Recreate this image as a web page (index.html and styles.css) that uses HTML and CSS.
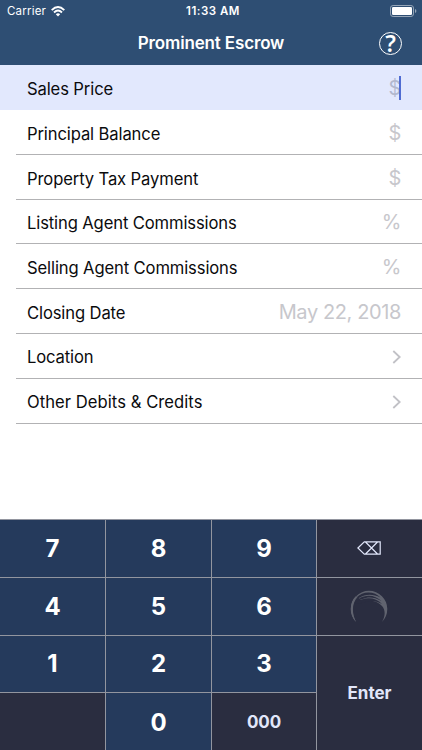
FILE: index.html
```html
<!DOCTYPE html>
<html lang="en">
<head>
<meta charset="utf-8">
<title>Prominent Escrow</title>
<link rel="stylesheet" href="styles.css">
</head>
<body>
<div class="app">
  <header class="header">
    <div class="status">
      <div class="carrier"><span>Carrier</span>
        <svg class="wifi" width="14" height="11" viewBox="0 0 14 11" fill="none" stroke="#fff" stroke-width="1.9"><path d="M.7 4.1Q7-1.9 13.3 4.1M3 6.5Q7 2.7 11 6.5"/><path d="M4.8 8.2Q7 6.3 9.2 8.2L7 10.5Z" fill="#fff" stroke="none"/></svg>
      </div>
      <div class="time">11:33 AM</div>
      <svg class="battery" width="27" height="12" viewBox="0 0 27 12"><rect x=".5" y=".5" width="23" height="11" rx="2.6" fill="none" stroke="#96a6b8"/><rect x="2" y="2" width="20" height="8" rx="1.2" fill="#fff"/><path d="M25 4q1.4.4 1.4 2T25 8z" fill="#96a6b8"/></svg>
    </div>
    <div class="nav">
      <h1 class="title">Prominent Escrow</h1>
      <div class="help">?</div>
    </div>
  </header>
  <main class="form">
    <div class="row active"><span class="label">Sales Price</span><span class="value">$</span><i class="caret"></i></div>
    <div class="row"><span class="label">Principal Balance</span><span class="value">$</span></div>
    <div class="row"><span class="label">Property Tax Payment</span><span class="value">$</span></div>
    <div class="row"><span class="label">Listing Agent Commissions</span><span class="value">%</span></div>
    <div class="row"><span class="label">Selling Agent Commissions</span><span class="value">%</span></div>
    <div class="row"><span class="label">Closing Date</span><span class="value">May 22, 2018</span></div>
    <div class="row link"><span class="label">Location</span><svg class="chevron" width="9" height="14" viewBox="0 0 9 14"><path d="M1.3 1L7.7 7L1.3 13"/></svg></div>
    <div class="row link"><span class="label wide">Other Debits &amp; Credits</span><svg class="chevron" width="9" height="14" viewBox="0 0 9 14"><path d="M1.3 1L7.7 7L1.3 13"/></svg></div>
  </main>
  <div class="keypad">
    <div class="key">7</div><div class="key">8</div><div class="key">9</div>
    <div class="key dark"><svg class="delete" width="24" height="14" viewBox="0 0 24 14" fill="none" stroke="#e1e6fa" stroke-width="1.2"><path d="M.9 7L7.3.8H23.2V13.2H7.3ZM8.5 1L20.5 13M20.5 1L8.5 13"/></svg></div>
    <div class="key">4</div><div class="key">5</div><div class="key">6</div>
    <div class="key dark"><svg class="swirl" width="38" height="34" viewBox="0 0 38 34" fill="#60636f"><path d="M6 33A18.300 18.300 0 1 1 32 33C35.500 27 35.500 21 32 17C28 12 20 10.500 13.500 12.500L6.500 7.500C1.500 14 1 24 6 33Z"/><path d="M6 9C14 .8 25 3 30.500 8.500C23 4.800 16 4.500 9 9Z" fill="#2a2d40"/><path d="M9 9.500C17 4.500 26 6.500 31.500 12C24 8 18 7.500 12 10.500Z" fill="#2a2d40"/><path d="M4 13L12 10.500C19 8 27 9.500 32 15C26 11.300 19 11 14 13.500L7 15Z" fill="#2a2d40"/><path d="M6 33C-.5 26-.8 14 5.500 7.500L7.500 8C1.800 14 1.500 24 6 33Z"/></svg></div>
    <div class="key">1</div><div class="key">2</div><div class="key">3</div>
    <div class="key dark enter">Enter</div>
    <div class="key dark"></div><div class="key">0</div><div class="key dark zeros">000</div>
  </div>
</div>
</body>
</html>
```
FILE: styles.css
```css
* { box-sizing: border-box; }
body { margin: 0; font-family: Inter, "Liberation Sans", sans-serif; background: #fff; }
.app { width: 422px; height: 750px; display: flex; flex-direction: column; overflow: hidden; }
.header { height: 65px; flex: none; background: #2e4e73; color: #fff; }
.status { height: 21px; display: grid; grid-template-columns: 1fr auto 1fr; align-items: center; padding: 1px 5px 0 7px; font-size: 11.5px; }
.carrier { display: flex; align-items: center; gap: 5px; letter-spacing: .2px; }
.time { margin-left: 2px; font-weight: 600; font-size: 11.5px; letter-spacing: .5px; }
.battery { justify-self: end; }
.nav { height: 44px; display: grid; grid-template-columns: 1fr auto 1fr; align-items: center; padding: 0 20px; }
.title { grid-column: 2; margin: 0; font-size: 17px; font-weight: 600; letter-spacing: -.15px; }
.help { justify-self: end; width: 23px; height: 23px; border: 1px solid #fff; border-radius: 50%; font: 600 23px/20px "Noto Sans", sans-serif; text-align: center; }
.form { height: 454px; flex: none; display: grid; grid-template-rows: 45px repeat(7, 44.8px); }
.row { display: flex; align-items: center; margin-left: 15.5px; padding: 4px 21.5px 0 11.5px; border-bottom: 1px solid #b2b2b4; }
.row.active { margin-left: 0; padding-left: 27px; background: #e2e8fd; border-color: #e2e8fd; position: relative; }
.row.link { padding-top: 2px; }
.label { flex: 1; font-size: 16.6px; letter-spacing: -.12px; color: #0b0b0d; }
.label.wide { letter-spacing: .05px; }
.value { margin-top: -2px; font-size: 20px; color: #c7c7cc; letter-spacing: -.4px; margin-right: -.4px; }
.active .value { color: #b2b8ce; }
.caret { position: absolute; left: 399px; top: 11px; width: 2px; height: 24px; background: #506cd2; }
.chevron { fill: none; stroke: #c1c1c6; stroke-width: 1.8; }
.keypad { flex: 1; display: grid; grid-template-columns: 105px 105px 104px 105px; grid-template-rows: 56.8px 56.8px 56.8px 57.6px; gap: 1px; padding-top: 1px; background: #92959f; }
.key { display: flex; align-items: center; justify-content: center; background: #253a5c; color: #fff; font-size: 24px; font-weight: 700; }
.dark { background: #2a2d40; color: #e1e6fa; }
.delete { margin-right: 2px; }
.swirl { margin-right: 1px; }
.enter { grid-row: 3 / span 2; grid-column: 4; font-size: 17px; padding-bottom: 1px; }
.zeros { font-size: 17px; letter-spacing: -.1px; padding-bottom: 1px; }
```
